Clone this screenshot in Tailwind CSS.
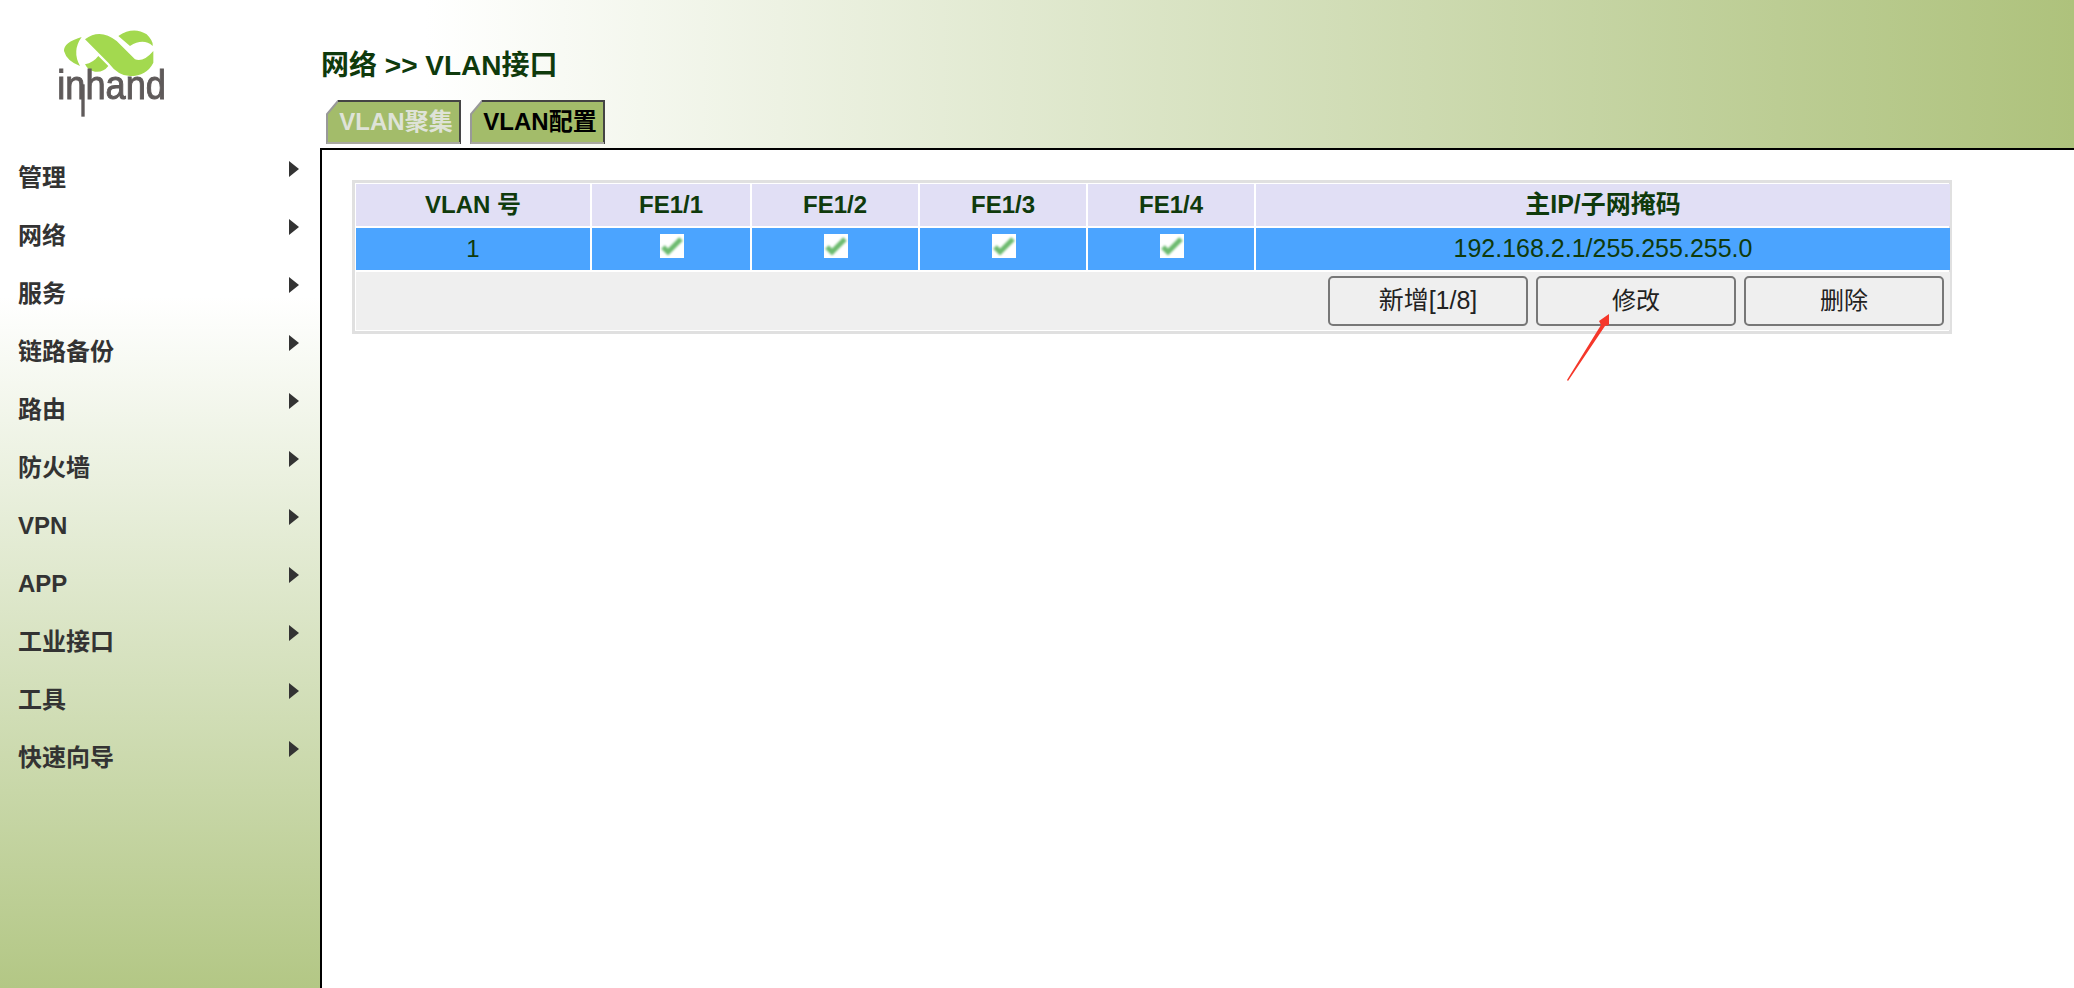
<!DOCTYPE html>
<html lang="zh-CN">
<head>
    <meta charset="UTF-8">
    <title>VLAN接口</title>
    <script src="https://cdn.jsdelivr.net/npm/@tailwindcss/browser@4"></script>
</head>
<body class="relative h-[988px] w-[2074px] overflow-hidden bg-white font-['Liberation_Sans','Noto_Sans_CJK_SC',sans-serif]">
    <div class="flex h-full">
        <!-- left menu -->
        <div class="flex w-[320px] flex-col bg-gradient-to-b from-white from-[30%] to-[#b3c785]">
            <div class="h-[149px] pt-[21px] pl-[40px]">
                <svg width="150" height="110" viewBox="0 0 450 330" class="blur-[0.6px]">
                    <path fill="#a3d94f" d="M125 48 Q70 65 72 90 Q80 120 120 135 Q95 90 125 48Z"/>
                    <path fill="#a3d94f" d="M135 55 Q180 20 230 60 L285 115 Q310 125 340 90 L340 125 Q320 165 270 165 Q235 165 205 125 L170 90Z"/>
                    <path fill="#a3d94f" d="M235 45 Q280 15 320 40 Q340 60 338 75 Q310 50 270 75Z"/>
                    <path fill="#a3d94f" d="M135 130 Q160 125 175 105 L205 135 Q190 155 165 152 Q145 150 135 130Z"/>
                    <text x="52" y="235" font-size="120" textLength="326" lengthAdjust="spacingAndGlyphs" fill="#5f5a5a" stroke="#5f5a5a" stroke-width="3" font-family="Liberation Sans">inhand</text>
                    <rect x="124" y="190" width="10" height="97" fill="#5f5a5a"/>
                </svg>
            </div>
            <ul class="flex flex-col text-[24px] leading-[58px] font-semibold text-[#333]">
                <li class="flex h-[58px] items-center justify-between pr-[21px] pl-[18px]">管理<span class="mb-[18px] h-0 w-0 border-y-[8px] border-l-[10px] border-y-transparent border-l-[#333]"></span></li>
                <li class="flex h-[58px] items-center justify-between pr-[21px] pl-[18px]">网络<span class="mb-[18px] h-0 w-0 border-y-[8px] border-l-[10px] border-y-transparent border-l-[#333]"></span></li>
                <li class="flex h-[58px] items-center justify-between pr-[21px] pl-[18px]">服务<span class="mb-[18px] h-0 w-0 border-y-[8px] border-l-[10px] border-y-transparent border-l-[#333]"></span></li>
                <li class="flex h-[58px] items-center justify-between pr-[21px] pl-[18px]">链路备份<span class="mb-[18px] h-0 w-0 border-y-[8px] border-l-[10px] border-y-transparent border-l-[#333]"></span></li>
                <li class="flex h-[58px] items-center justify-between pr-[21px] pl-[18px]">路由<span class="mb-[18px] h-0 w-0 border-y-[8px] border-l-[10px] border-y-transparent border-l-[#333]"></span></li>
                <li class="flex h-[58px] items-center justify-between pr-[21px] pl-[18px]">防火墙<span class="mb-[18px] h-0 w-0 border-y-[8px] border-l-[10px] border-y-transparent border-l-[#333]"></span></li>
                <li class="flex h-[58px] items-center justify-between pr-[21px] pl-[18px]">VPN<span class="mb-[18px] h-0 w-0 border-y-[8px] border-l-[10px] border-y-transparent border-l-[#333]"></span></li>
                <li class="flex h-[58px] items-center justify-between pr-[21px] pl-[18px]">APP<span class="mb-[18px] h-0 w-0 border-y-[8px] border-l-[10px] border-y-transparent border-l-[#333]"></span></li>
                <li class="flex h-[58px] items-center justify-between pr-[21px] pl-[18px]">工业接口<span class="mb-[18px] h-0 w-0 border-y-[8px] border-l-[10px] border-y-transparent border-l-[#333]"></span></li>
                <li class="flex h-[58px] items-center justify-between pr-[21px] pl-[18px]">工具<span class="mb-[18px] h-0 w-0 border-y-[8px] border-l-[10px] border-y-transparent border-l-[#333]"></span></li>
                <li class="flex h-[58px] items-center justify-between pr-[21px] pl-[18px]">快速向导<span class="mb-[18px] h-0 w-0 border-y-[8px] border-l-[10px] border-y-transparent border-l-[#333]"></span></li>
            </ul>
        </div>

        <div class="flex min-w-0 flex-1 flex-col">
            <!-- title and tabs -->
            <div class="h-[148px] bg-gradient-to-r from-white from-[6%] to-[#aec27c] pt-[48px]">
                <p class="h-[52px] pl-[1px] text-[28px] leading-[36px] font-bold text-[#0f3a0c]">网络 &gt;&gt; VLAN接口</p>
                <div class="ml-[6px] flex gap-[8px]">
                    <div class="relative flex h-[44px] w-[136px] items-center justify-center pl-[4px] text-[24px] font-bold text-[#dfe3d8]">
                        <svg width="136" height="44" class="absolute inset-0">
                            <polygon points="1,44 1,14 12,1 134,1 134,44" fill="#a3bc6a"/>
                            <polyline points="1,44 1,14 12,1 134,1" fill="none" stroke="#999" stroke-width="2"/>
                            <polyline points="12,1 134,1 134,44" fill="none" stroke="#444" stroke-width="2"/>
                            <line x1="1" y1="43" x2="134" y2="43" stroke="#a9a9a0" stroke-width="2"/>
                        </svg>
                        <span class="relative">VLAN聚集</span>
                    </div>
                    <div class="relative flex h-[44px] w-[136px] items-center justify-center pl-[4px] text-[24px] font-bold text-black">
                        <svg width="136" height="44" class="absolute inset-0">
                            <polygon points="1,44 1,14 12,1 134,1 134,44" fill="#a3bc6a"/>
                            <polyline points="1,44 1,14 12,1 134,1" fill="none" stroke="#999" stroke-width="2"/>
                            <polyline points="12,1 134,1 134,44" fill="none" stroke="#444" stroke-width="2"/>
                            <line x1="1" y1="43" x2="134" y2="43" stroke="#a9a9a0" stroke-width="2"/>
                        </svg>
                        <span class="relative">VLAN配置</span>
                    </div>
                </div>
            </div>

            <!-- main box -->
            <div class="flex-1 border-t-[2px] border-l-[2px] border-black bg-white pt-[30px] pl-[30px]">
                <div class="grid w-[1600px] grid-cols-[234px_158px_166px_166px_166px_694px] grid-rows-[42px_42px_58px] gap-[2px] border-[3px] border-[#e0e0e0] p-[1px] text-center text-[24px] text-[#0f3a0c]">
                    <div class="flex items-center justify-center bg-[#e1dff5] font-bold">VLAN 号</div>
                    <div class="flex items-center justify-center bg-[#e1dff5] font-bold">FE1/1</div>
                    <div class="flex items-center justify-center bg-[#e1dff5] font-bold">FE1/2</div>
                    <div class="flex items-center justify-center bg-[#e1dff5] font-bold">FE1/3</div>
                    <div class="flex items-center justify-center bg-[#e1dff5] font-bold">FE1/4</div>
                    <div class="flex items-center justify-center bg-[#e1dff5] text-[25px] font-bold">主IP/子网掩码</div>

                    <div class="flex items-center justify-center bg-[#4ba4ff]">1</div>
                    <div class="flex justify-center bg-[#4ba4ff] pt-[6px] pl-[2px]">
                        <svg width="24" height="24" class="bg-white"><polyline points="3,13 8,18 21,5" fill="none" stroke="#6dbb6f" stroke-width="5" class="blur-[0.8px]"/></svg>
                    </div>
                    <div class="flex justify-center bg-[#4ba4ff] pt-[6px] pl-[2px]">
                        <svg width="24" height="24" class="bg-white"><polyline points="3,13 8,18 21,5" fill="none" stroke="#6dbb6f" stroke-width="5" class="blur-[0.8px]"/></svg>
                    </div>
                    <div class="flex justify-center bg-[#4ba4ff] pt-[6px] pl-[2px]">
                        <svg width="24" height="24" class="bg-white"><polyline points="3,13 8,18 21,5" fill="none" stroke="#6dbb6f" stroke-width="5" class="blur-[0.8px]"/></svg>
                    </div>
                    <div class="flex justify-center bg-[#4ba4ff] pt-[6px] pl-[2px]">
                        <svg width="24" height="24" class="bg-white"><polyline points="3,13 8,18 21,5" fill="none" stroke="#6dbb6f" stroke-width="5" class="blur-[0.8px]"/></svg>
                    </div>
                    <div class="flex items-center justify-center bg-[#4ba4ff] text-[25px]">192.168.2.1/255.255.255.0</div>

                    <div class="col-span-6 flex justify-end gap-[8px] bg-[#efefef] pt-[4px] pr-[6px]">
                        <button class="h-[50px] w-[200px] rounded-[5px] border-[2px] border-[#777] text-[25px] text-[#222]">新增[1/8]</button>
                        <button class="h-[50px] w-[200px] rounded-[5px] border-[2px] border-[#777] text-[24px] text-[#222]">修改</button>
                        <button class="h-[50px] w-[200px] rounded-[5px] border-[2px] border-[#777] text-[24px] text-[#222]">删除</button>
                    </div>
                </div>
            </div>
        </div>
    </div>

    <!-- red annotation arrow -->
    <svg width="60" height="80" class="absolute top-[310px] left-[1560px]">
        <polygon points="7,70 41,15 39,11 49,4 49,15 45,16 8,71" fill="#f5372a"/>
    </svg>
</body>
</html>
